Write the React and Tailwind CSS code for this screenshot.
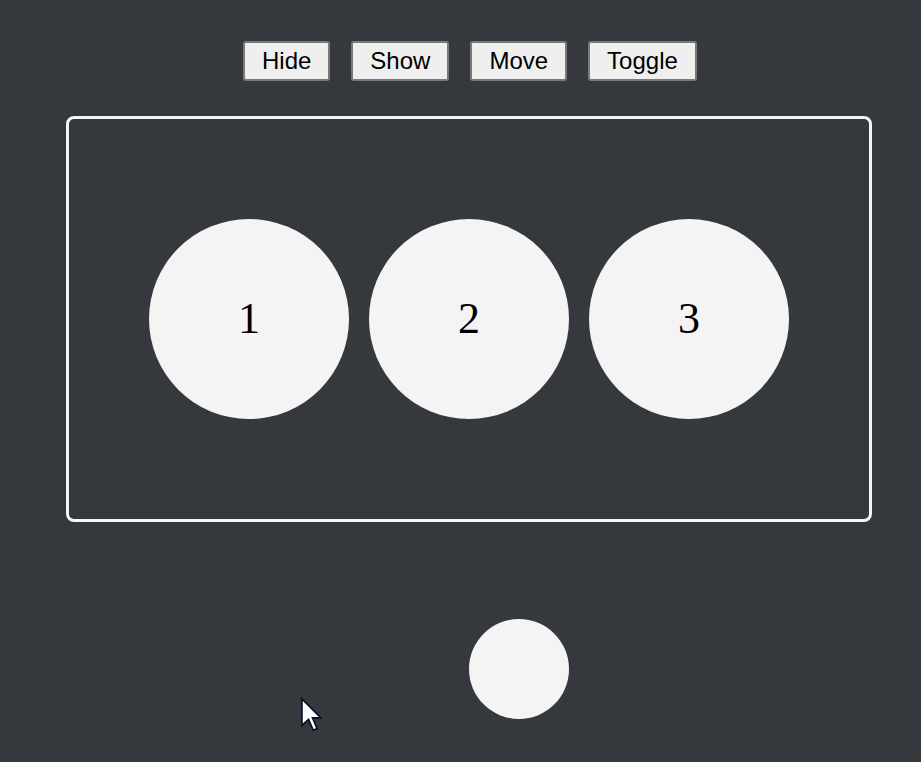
export default function App() {
  const btn =
    "h-[40px] px-[17px] border-2 border-[#7a7a7a] rounded-[3px] bg-[#efefef] text-black text-[24px] leading-[28px] font-['Liberation_Sans',Arial,sans-serif]";
  return (
    <div className="relative w-[921px] h-[762px] bg-[#35383d] overflow-hidden">
      <div className="pt-[41px] pl-[243px] flex gap-[21px]">
        <button className={btn}>Hide</button>
        <button className={btn}>Show</button>
        <button className={btn}>Move</button>
        <button className={btn}>Toggle</button>
      </div>
      <div className="mt-[35px] ml-[66px] w-[806px] h-[406px] border-[3px] border-[#f5f5f5] rounded-[8px] flex items-center justify-center gap-[20px]">
        {["1", "2", "3"].map((n) => (
          <div
            key={n}
            className="w-[200px] h-[200px] rounded-full bg-[#f4f4f4] flex items-center justify-center text-black text-[44px] font-['Liberation_Serif','Times_New_Roman',serif]"
          >
            {n}
          </div>
        ))}
      </div>
      <div className="mt-[97px] ml-[469px] w-[100px] h-[100px] rounded-full bg-[#f4f4f4]"></div>
      <svg
        className="absolute left-[300px] top-[697px]"
        width="26"
        height="40"
        viewBox="0 0 13 20"
      >
        <path
          d="M1 1 L1 15 L4.5 11.8 L7 17.5 L9 16.6 L6.6 11 L11 11 Z"
          fill="#ffffff"
          stroke="#0a0f2a"
          strokeWidth="0.9"
          strokeLinejoin="miter"
          transform="scale(0.95)"
        />
      </svg>
    </div>
  );
}
